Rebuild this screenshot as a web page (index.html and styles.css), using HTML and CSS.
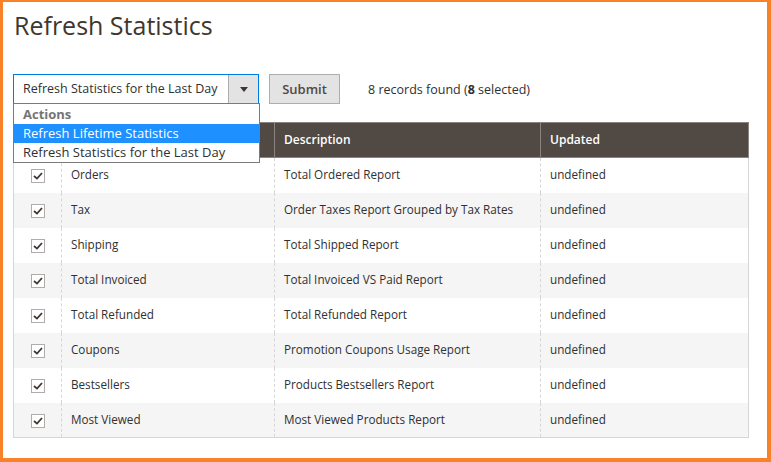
FILE: index.html
```html
<!DOCTYPE html>
<html lang="en">
<head>
<meta charset="utf-8">
<title>Refresh Statistics</title>
<link rel="stylesheet" href="styles.css">
</head>
<body>
<div class="frame">
  <h1 class="title">Refresh Statistics</h1>
  <div class="toolbar">
    <div class="select-wrap">
      <div class="select">
        <span class="select-text">Refresh Statistics for the Last Day</span>
        <span class="select-arrow"><svg width="8" height="5" viewBox="0 0 8 5"><path d="M0 0h8L4 5z" fill="#41362f"/></svg></span>
      </div>
      <div class="dropdown">
        <div class="group">Actions</div>
        <div class="option active">Refresh Lifetime Statistics</div>
        <div class="option">Refresh Statistics for the Last Day</div>
      </div>
    </div>
    <button class="submit">Submit</button>
    <span class="records">8 records found (<b>8</b> selected)</span>
  </div>
  <table class="grid">
    <colgroup>
      <col class="c-check"><col class="c-name"><col class="c-desc"><col class="c-upd">
    </colgroup>
    <thead>
      <tr><th></th><th></th><th>Description</th><th>Updated</th></tr>
    </thead>
    <tbody>
      <tr><td class="chk"><span class="cb"><svg width="10" height="8" viewBox="0 0 10 8"><path d="M1 4l3 2.6L9 1" fill="none" stroke="#41362f" stroke-width="1.8"/></svg></span></td><td>Orders</td><td>Total Ordered Report</td><td>undefined</td></tr>
      <tr><td class="chk"><span class="cb"><svg width="10" height="8" viewBox="0 0 10 8"><path d="M1 4l3 2.6L9 1" fill="none" stroke="#41362f" stroke-width="1.8"/></svg></span></td><td>Tax</td><td>Order Taxes Report Grouped by Tax Rates</td><td>undefined</td></tr>
      <tr><td class="chk"><span class="cb"><svg width="10" height="8" viewBox="0 0 10 8"><path d="M1 4l3 2.6L9 1" fill="none" stroke="#41362f" stroke-width="1.8"/></svg></span></td><td>Shipping</td><td>Total Shipped Report</td><td>undefined</td></tr>
      <tr><td class="chk"><span class="cb"><svg width="10" height="8" viewBox="0 0 10 8"><path d="M1 4l3 2.6L9 1" fill="none" stroke="#41362f" stroke-width="1.8"/></svg></span></td><td>Total Invoiced</td><td>Total Invoiced VS Paid Report</td><td>undefined</td></tr>
      <tr><td class="chk"><span class="cb"><svg width="10" height="8" viewBox="0 0 10 8"><path d="M1 4l3 2.6L9 1" fill="none" stroke="#41362f" stroke-width="1.8"/></svg></span></td><td>Total Refunded</td><td>Total Refunded Report</td><td>undefined</td></tr>
      <tr><td class="chk"><span class="cb"><svg width="10" height="8" viewBox="0 0 10 8"><path d="M1 4l3 2.6L9 1" fill="none" stroke="#41362f" stroke-width="1.8"/></svg></span></td><td>Coupons</td><td>Promotion Coupons Usage Report</td><td>undefined</td></tr>
      <tr><td class="chk"><span class="cb"><svg width="10" height="8" viewBox="0 0 10 8"><path d="M1 4l3 2.6L9 1" fill="none" stroke="#41362f" stroke-width="1.8"/></svg></span></td><td>Bestsellers</td><td>Products Bestsellers Report</td><td>undefined</td></tr>
      <tr><td class="chk"><span class="cb"><svg width="10" height="8" viewBox="0 0 10 8"><path d="M1 4l3 2.6L9 1" fill="none" stroke="#41362f" stroke-width="1.8"/></svg></span></td><td>Most Viewed</td><td>Most Viewed Products Report</td><td>undefined</td></tr>
    </tbody>
  </table>
</div>
</body>
</html>
```

FILE: styles.css
```css
* { box-sizing: border-box; }
html, body { margin: 0; padding: 0; background: #fff; }
body { font-family: "Open Sans", "Liberation Sans", sans-serif; color: #303030; font-size: 13px; }

.frame {
  width: 771px;
  height: 462px;
  border-style: solid;
  border-color: #f98228;
  border-width: 2px 4px 4px 3px;
  padding: 0 20px 0 10px;
  overflow: hidden;
}

.title {
  margin: 7px 0 0 1px;
  font-size: 25px;
  line-height: 32px;
  font-weight: 400;
  color: #41362f;
}

.toolbar {
  display: flex;
  align-items: center;
  margin-top: 33px;
  height: 30px;
}

.select-wrap { position: relative; width: 246px; height: 30px; }

.select {
  display: flex;
  height: 30px;
  border: 1px solid #007bdb;
  background: #fff;
}
.select-text {
  flex: 1;
  padding-left: 9px;
  line-height: 28px;
  font-size: 12.5px;
  white-space: nowrap;
  color: #303030;
}
.select-arrow {
  width: 30px;
  background: #e3e3e3;
  border-left: 1px solid #adadad;
  display: flex;
  align-items: center;
  justify-content: center;
}

.dropdown {
  position: absolute;
  top: 29px;
  left: 0;
  width: 247px;
  border: 1px solid #7a7a7a;
  background: #fff;
  padding-top: 1px;
  z-index: 5;
  font-size: 13px;
}
.dropdown .group, .dropdown .option {
  line-height: 19px;
  height: 19px;
  padding-left: 9px;
  white-space: nowrap;
}
.dropdown .group { font-weight: 700; color: #757575; }
.dropdown .option { color: #303030; }
.dropdown .option.active { background: #1e90ff; color: #fff; }

.submit {
  margin-left: 10px;
  width: 71px;
  height: 30px;
  background: #e3e3e3;
  border: 1px solid #adadad;
  border-radius: 0;
  font-family: inherit;
  font-size: 13px;
  font-weight: 600;
  color: #514943;
  padding: 0;
}

.records { margin-left: 28px; color: #303030; font-size: 12.5px; }
.records b { font-weight: 700; }

.grid {
  margin-top: 18px;
  width: 735px;
  border-collapse: collapse;
  table-layout: fixed;
  border: 1px solid #d6d6d6;
  font-size: 11.7px;
}
.c-check { width: 48px; }
.c-name { width: 213px; }
.c-desc { width: 266px; }
.c-upd { width: 208px; }

.grid th {
  background: #514943;
  color: #fff;
  font-weight: 600;
  font-size: 12px;
  text-align: left;
  padding: 0 9px 2px;
  height: 35px;
  border: 1px solid #8a837f;
}
.grid td {
  height: 35px;
  padding: 0 9px 2px;
  border-left: 1px dashed #d6d6d6;
  white-space: nowrap;
  vertical-align: middle;
}
.grid td:first-child { border-left: 1px solid #d6d6d6; }
.grid tbody tr:nth-child(even) td { background: #f5f5f5; }
.grid td.chk { text-align: center; padding: 0 0 1px; }
.cb {
  display: inline-flex;
  align-items: center;
  justify-content: center;
  width: 14px;
  height: 14px;
  border: 1px solid #adadad;
  background: #fff;
  vertical-align: middle;
}
```
